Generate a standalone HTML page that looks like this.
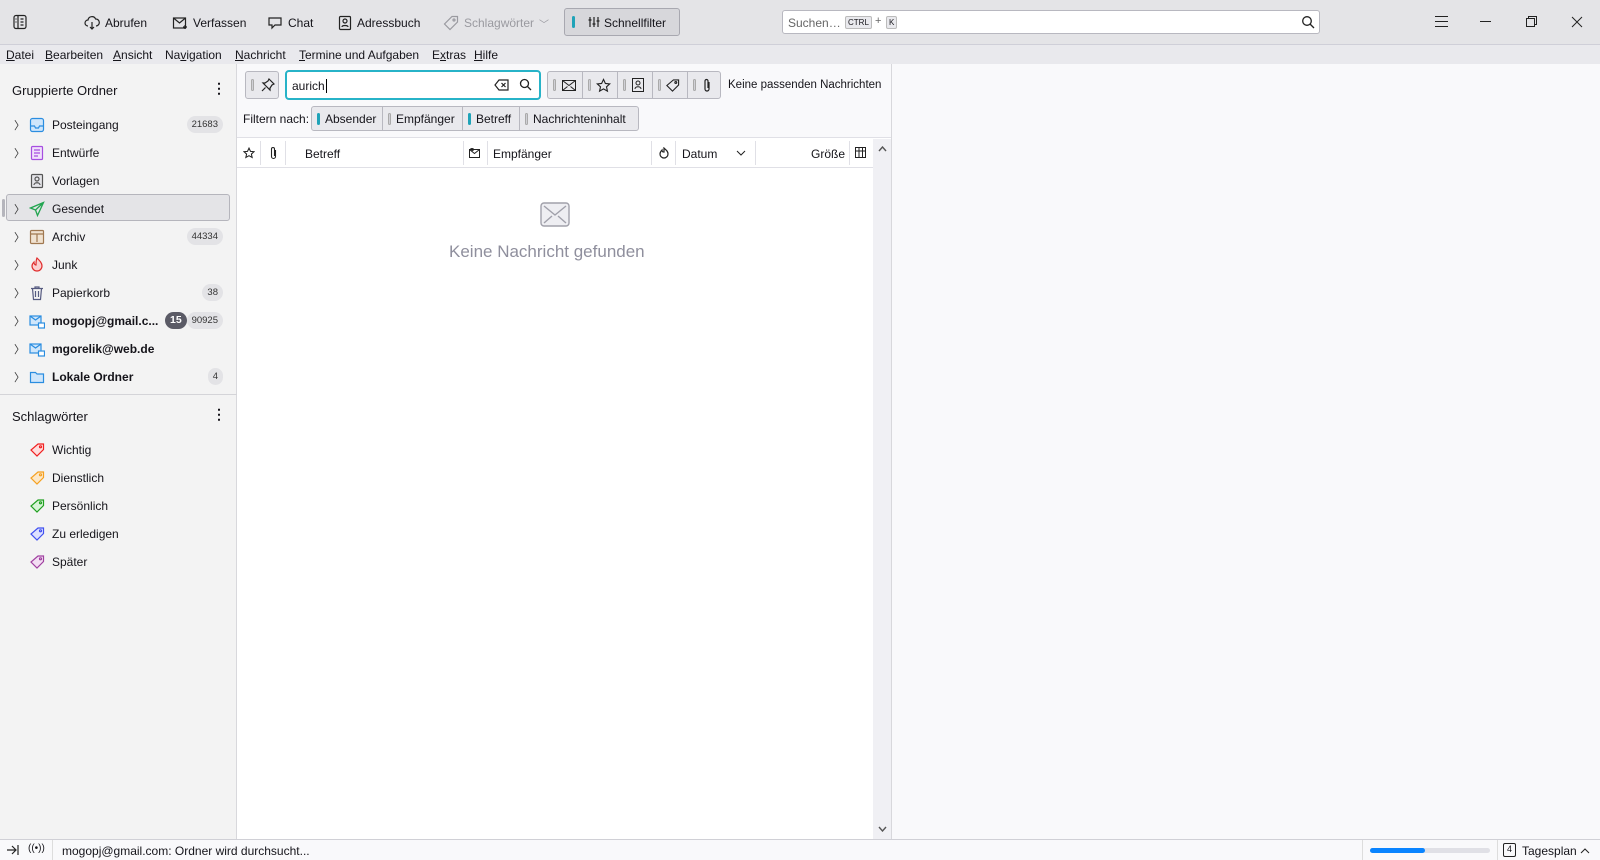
<!DOCTYPE html>
<html><head><meta charset="utf-8"><style>
*{box-sizing:border-box;margin:0;padding:0}
body{width:1600px;height:860px;overflow:hidden;font-family:"Liberation Sans",sans-serif;font-size:12px;color:#15141a;background:#f9f9fb;position:relative;white-space:nowrap}
.abs{position:absolute}
#tb{left:0;top:0;width:1600px;height:45px;background:#e4e4e7;border-bottom:1px solid #cfcfd8}
#mb{left:0;top:45px;width:1600px;height:19px;background:#e9e9ed}
.mi{position:absolute;top:3px;font-size:12px}
.tbi{position:absolute;top:15px;font-size:12px;display:flex;align-items:center;gap:5px}
#side{left:0;top:64px;width:237px;height:775px;background:#f3f3f3;border-right:1px solid #d8d8dc}
.row{position:absolute;left:0;width:237px;height:28px;display:flex;align-items:center}
.row .chev{position:absolute;left:14px;font-size:11px;color:#333}
.row .ic{position:absolute;left:29px;top:6px;width:16px;height:16px}
.row .t{position:absolute;left:52px;font-size:12px}
.badge{position:absolute;background:#e3e3e6;border-radius:9px;font-size:9.5px;height:17px;line-height:17px;padding:0 5px;color:#333}
#list{left:237px;top:64px;width:654px;height:775px;background:#fff}
#qf{left:237px;top:64px;width:654px;height:74px;background:#f9f9fb;border-bottom:1px solid #e0e0e6}
.btn{position:absolute;background:#e9e9ed;border:1px solid #b8b8c0;border-radius:3px}
.pill{display:inline-block;width:3px;height:12px;border-radius:2px;background:#d0d0d6;border:1px solid #aaa;margin-right:5px;vertical-align:-2px}
.pill.on{background:#1fa3b8;border-color:#1fa3b8}
.ch{position:absolute;top:147px;font-size:12px}
.sep{position:absolute;top:141px;width:1px;height:24px;background:#e0e0e6}
#status{left:0;top:839px;width:1600px;height:21px;background:#f9f9fb;border-top:1px solid #d0d0d6}
</style></head><body>
<div id="tb" class="abs">
 <svg class="abs" style="left:12px;top:14px" width="16" height="16" viewBox="0 0 16 16" fill="none" stroke="#222" stroke-width="1.2"><rect x="2" y="1.5" width="12" height="13" rx="2"/><path d="M6 2v12M8.5 5h3M8.5 8h3M8.5 11h3M3.5 5h1M3.5 8h1"/></svg>
 <div class="tbi" style="left:84px"><svg width="16" height="16" viewBox="0 0 16 16" fill="none" stroke="#222" stroke-width="1.2"><path d="M4 11a3 3 0 010-6 4 4 0 017.6-1A3 3 0 0112 11M8 7v7M6 12l2 2 2-2"/></svg>Abrufen</div>
 <div class="tbi" style="left:172px"><svg width="16" height="16" viewBox="0 0 16 16" fill="none" stroke="#222" stroke-width="1.2"><rect x="1.5" y="3" width="12" height="10"/><path d="M1.5 3l6 5 6-5M11 12h4M13 10v4"/></svg>Verfassen</div>
 <div class="tbi" style="left:267px"><svg width="16" height="16" viewBox="0 0 16 16" fill="none" stroke="#222" stroke-width="1.2"><path d="M2 3h12v7H8l-3 3v-3H2z"/></svg>Chat</div>
 <div class="tbi" style="left:338px"><svg width="14" height="16" viewBox="0 0 14 16" fill="none" stroke="#222" stroke-width="1.2"><rect x="1.5" y="1.5" width="11" height="13" rx="1"/><circle cx="7" cy="6" r="2"/><path d="M4 12c0-2 6-2 6 0"/></svg>Adressbuch</div>
 <div class="tbi" style="left:443px;color:#9a9aa0"><svg width="16" height="16" viewBox="0 0 16 16" fill="none" stroke="#9a9aa0" stroke-width="1.2"><path d="M9 1.5h5.5V7L7 14.5 1.5 9z"/><circle cx="11" cy="5" r="1"/></svg>Schlagwörter <span style="font-size:10px">﹀</span></div>
 <div class="btn" style="left:564px;top:8px;width:116px;height:28px;background:#d7d7db;border-color:#a8a8b0"><span class="pill on" style="position:absolute;left:7px;top:7px"></span>
  <svg class="abs" style="left:23px;top:7px" width="12" height="12" fill="none" stroke="#222" stroke-width="1.2"><path d="M2 1v10M6 1v10M10 1v10M0.5 4h3M4.5 8h3M8.5 5h3"/></svg>
  <span style="position:absolute;left:39px;top:7px">Schnellfilter</span></div>
 <div class="abs" style="left:782px;top:10px;width:538px;height:24px;background:#fff;border:1px solid #b8b8c0;border-radius:3px">
  <span class="abs" style="left:5px;top:5px;color:#666;font-size:12px">Suchen…</span>
  <span class="abs" style="left:62px;top:5px;font-size:8px;background:#e9e9ed;border:1px solid #bbb;border-radius:2px;padding:1px 2px">CTRL</span>
  <span class="abs" style="left:92px;top:4px;color:#666;font-size:11px">+</span>
  <span class="abs" style="left:103px;top:5px;font-size:8px;background:#e9e9ed;border:1px solid #bbb;border-radius:2px;padding:1px 2px">K</span>
  <svg class="abs" style="left:518px;top:4px" width="14" height="14" viewBox="0 0 14 14" fill="none" stroke="#222" stroke-width="1.3"><circle cx="6" cy="6" r="4.3"/><path d="M9 9l4 4"/></svg>
 </div>
 <svg class="abs" style="left:1435px;top:16px" width="13" height="11" stroke="#222"><path d="M0 .5h13M0 5.5h13M0 10.5h13"/></svg>
 <div class="abs" style="left:1480px;top:21px;width:11px;height:1px;background:#222"></div>
 <svg class="abs" style="left:1526px;top:16px" width="11" height="11" fill="none" stroke="#222"><rect x="0.5" y="2.5" width="8" height="8"/><path d="M2.5 2.5V.5h8v8h-2"/></svg>
 <svg class="abs" style="left:1571px;top:16px" width="12" height="12" stroke="#222"><path d="M1 1l10 10M11 1L1 11"/></svg>
</div>
<div id="mb" class="abs">
 <span class="mi" style="left:6px"><u>D</u>atei</span><span class="mi" style="left:45px"><u>B</u>earbeiten</span><span class="mi" style="left:113px"><u>A</u>nsicht</span><span class="mi" style="left:165px">Na<u>v</u>igation</span><span class="mi" style="left:235px"><u>N</u>achricht</span><span class="mi" style="left:299px"><u>T</u>ermine und Aufgaben</span><span class="mi" style="left:432px">E<u>x</u>tras</span><span class="mi" style="left:474px"><u>H</u>ilfe</span>
</div>
<div id="side" class="abs">
 <div class="abs" style="left:12px;top:19px;font-size:13px">Gruppierte Ordner</div>
 <div class="abs" style="left:212px;top:16px;font-size:14px;font-weight:bold">⋮</div>
 <div class="row" style="top:47px"><span class="chev">〉</span><svg class="ic" viewBox="0 0 16 16" fill="none" stroke="#2a8de0" stroke-width="1.2"><rect x="1.5" y="1.5" width="13" height="13" rx="2" fill="#cfe6fb"/><path d="M1.5 9h4l1 2h3l1-2h4"/></svg><span class="t">Posteingang</span><span class="badge" style="right:14px;top:5px">21683</span></div>
 <div class="row" style="top:75px"><span class="chev">〉</span><svg class="ic" viewBox="0 0 16 16" fill="none" stroke="#a64ee0" stroke-width="1.2"><rect x="2.5" y="1.5" width="11" height="13" rx="1" fill="#f0e0fb"/><path d="M5 5h6M5 8h6M5 11h4"/></svg><span class="t">Entwürfe</span></div>
 <div class="row" style="top:103px"><svg class="ic" viewBox="0 0 16 16" fill="none" stroke="#555" stroke-width="1.2"><rect x="2.5" y="1.5" width="11" height="13" rx="1" fill="#e4e4e8"/><circle cx="8" cy="6" r="2"/><path d="M5 12c0-3 6-3 6 0"/></svg><span class="t">Vorlagen</span></div>
 <div class="abs" style="top:130px;left:6px;width:224px;height:27px;background:#e4e4e7;border:1px solid #b5b5bc;border-radius:3px"></div>
 <div class="abs" style="left:2px;top:135px;width:3px;height:18px;background:#b5b5bc;border-radius:2px"></div>
 <div class="row" style="top:131px"><span class="chev">〉</span><svg class="ic" viewBox="0 0 16 16" fill="none" stroke="#22a550" stroke-width="1.3"><path d="M14.5 1.5L1.5 7l5 2 2 5.5z M6.5 9l8-7.5"/></svg><span class="t">Gesendet</span></div>
 <div class="row" style="top:159px"><span class="chev">〉</span><svg class="ic" viewBox="0 0 16 16" fill="none" stroke="#a07850" stroke-width="1.2"><rect x="1.5" y="1.5" width="13" height="13" rx="1" fill="#f0e2d0"/><path d="M1.5 5h13M8 5v8"/></svg><span class="t">Archiv</span><span class="badge" style="right:14px;top:5px">44334</span></div>
 <div class="row" style="top:187px"><span class="chev">〉</span><svg class="ic" viewBox="0 0 16 16" fill="#fbd0d0" stroke="#e02c2c" stroke-width="1.2"><path d="M8 1c3 3 5 5 5 8a5 5 0 01-10 0c0-2 1-3 2-4 0 2 1 3 2 3 0-3 0-5 1-7z"/></svg><span class="t">Junk</span></div>
 <div class="row" style="top:215px"><span class="chev">〉</span><svg class="ic" viewBox="0 0 16 16" fill="none" stroke="#555a80" stroke-width="1.2"><path d="M2 3.5h12M6 3.5V2h4v1.5M3.5 3.5l1 11h7l1-11M6.5 6v6M9.5 6v6"/></svg><span class="t">Papierkorb</span><span class="badge" style="right:14px;top:5px">38</span></div>
 <div class="row" style="top:243px"><span class="chev">〉</span><svg class="ic" viewBox="0 0 16 16" fill="none" stroke="#2a8de0" stroke-width="1.2"><rect x="1" y="3" width="11" height="9" fill="#cfe6fb"/><path d="M1 3l5.5 4 5.5-4"/><rect x="9.5" y="10" width="6" height="5" fill="#fff"/></svg><span class="t" style="font-weight:bold">mogopj@gmail.c...</span><span class="badge" style="left:165px;top:5px;background:#5b5b66;color:#fff;font-weight:bold;font-size:10.5px">15</span><span class="badge" style="right:14px;top:5px">90925</span></div>
 <div class="row" style="top:271px"><span class="chev">〉</span><svg class="ic" viewBox="0 0 16 16" fill="none" stroke="#2a8de0" stroke-width="1.2"><rect x="1" y="3" width="11" height="9" fill="#cfe6fb"/><path d="M1 3l5.5 4 5.5-4"/><rect x="9.5" y="10" width="6" height="5" fill="#fff"/></svg><span class="t" style="font-weight:bold">mgorelik@web.de</span></div>
 <div class="row" style="top:299px"><span class="chev">〉</span><svg class="ic" viewBox="0 0 16 16" fill="#cfe6fb" stroke="#2a8de0" stroke-width="1.2"><path d="M1.5 3.5h5l1.5 1.5h6.5v8.5h-13z"/></svg><span class="t" style="font-weight:bold">Lokale Ordner</span><span class="badge" style="right:14px;top:5px">4</span></div>
 <div class="abs" style="left:0;top:330px;width:237px;height:1px;background:#d4d4d8"></div>
 <div class="abs" style="left:12px;top:345px;font-size:13px">Schlagwörter</div>
 <div class="abs" style="left:212px;top:342px;font-size:14px;font-weight:bold">⋮</div>
 <div class="row" style="top:372px"><svg class="ic" viewBox="0 0 16 16" fill="#fdd" stroke="#f02020" stroke-width="1.2"><path d="M9 2h5.5v5.5L8 14 2 8z"/><circle cx="11.5" cy="4.8" r="1" fill="#fff"/></svg><span class="t">Wichtig</span></div>
 <div class="row" style="top:400px"><svg class="ic" viewBox="0 0 16 16" fill="#fde8c8" stroke="#f5a020" stroke-width="1.2"><path d="M9 2h5.5v5.5L8 14 2 8z"/><circle cx="11.5" cy="4.8" r="1" fill="#fff"/></svg><span class="t">Dienstlich</span></div>
 <div class="row" style="top:428px"><svg class="ic" viewBox="0 0 16 16" fill="#d8f4d8" stroke="#20a020" stroke-width="1.2"><path d="M9 2h5.5v5.5L8 14 2 8z"/><circle cx="11.5" cy="4.8" r="1" fill="#fff"/></svg><span class="t">Persönlich</span></div>
 <div class="row" style="top:456px"><svg class="ic" viewBox="0 0 16 16" fill="#dde0ff" stroke="#4050f0" stroke-width="1.2"><path d="M9 2h5.5v5.5L8 14 2 8z"/><circle cx="11.5" cy="4.8" r="1" fill="#fff"/></svg><span class="t">Zu erledigen</span></div>
 <div class="row" style="top:484px"><svg class="ic" viewBox="0 0 16 16" fill="#f3def3" stroke="#a040a0" stroke-width="1.2"><path d="M9 2h5.5v5.5L8 14 2 8z"/><circle cx="11.5" cy="4.8" r="1" fill="#fff"/></svg><span class="t">Später</span></div>
</div>
<div id="list" class="abs"></div>
<div id="qf" class="abs">
 <div class="btn" style="left:8px;top:7px;width:34px;height:28px"><span class="pill" style="position:absolute;left:5px;top:7px"></span>
  <svg class="abs" style="left:15px;top:6px" width="14" height="14" fill="none" stroke="#222" stroke-width="1.2"><path d="M8 1l5 5-2 1-2 3 0 2-7-7 2 0 3-2z M4.5 9.5L1 13"/></svg></div>
 <div class="abs" style="left:48px;top:6px;width:256px;height:30px;background:#fff;border:2px solid #27b3c8;border-radius:4px">
  <span class="abs" style="left:5px;top:7px;font-size:12px">aurich<span style="border-left:1px solid #000;margin-left:1px"></span></span>
  <svg class="abs" style="left:207px;top:6px" width="16" height="14" viewBox="0 0 16 14" fill="none" stroke="#222" stroke-width="1.2"><path d="M5 2h9v10H5L1 7z M7.5 5l4 4M11.5 5l-4 4"/></svg>
  <svg class="abs" style="left:232px;top:6px" width="13" height="13" fill="none" stroke="#222" stroke-width="1.3"><circle cx="5.5" cy="5.5" r="4"/><path d="M8.5 8.5l3.5 3.5"/></svg>
 </div>
 <div class="btn" style="left:310px;top:7px;width:174px;height:28px">
  <div class="abs" style="left:34px;top:0;width:1px;height:26px;background:#b8b8c0"></div><div class="abs" style="left:69px;top:0;width:1px;height:26px;background:#b8b8c0"></div><div class="abs" style="left:104px;top:0;width:1px;height:26px;background:#b8b8c0"></div><div class="abs" style="left:139px;top:0;width:1px;height:26px;background:#b8b8c0"></div>
  <span class="pill" style="position:absolute;left:5px;top:7px"></span><span class="pill" style="position:absolute;left:40px;top:7px"></span><span class="pill" style="position:absolute;left:75px;top:7px"></span><span class="pill" style="position:absolute;left:110px;top:7px"></span><span class="pill" style="position:absolute;left:145px;top:7px"></span>
  <svg class="abs" style="left:14px;top:7px" width="14" height="12" fill="none" stroke="#222"><rect x=".5" y="1.5" width="13" height="10"/><path d="M.5 1.5l6.5 5 6.5-5M.5 11.5l5-4M13.5 11.5l-5-4"/></svg>
  <svg class="abs" style="left:48px;top:6px" width="15" height="15" viewBox="0 0 16 16" fill="none" stroke="#222" stroke-width="1.2"><path d="M8 1.5l2 4.3 4.6.5-3.4 3.1 1 4.6L8 11.6 3.8 14l1-4.6L1.4 6.3l4.6-.5z"/></svg>
  <svg class="abs" style="left:84px;top:6px" width="12" height="14" fill="none" stroke="#222"><rect x=".5" y=".5" width="11" height="13"/><circle cx="6" cy="5" r="2"/><path d="M3 11c0-3 6-3 6 0"/></svg>
  <svg class="abs" style="left:117px;top:6px" width="15" height="15" viewBox="0 0 16 16" fill="none" stroke="#222" stroke-width="1.2"><path d="M9 2h5.5v5.5L8 14 2 8z"/><circle cx="11.5" cy="4.8" r="1"/></svg>
  <svg class="abs" style="left:154px;top:6px" width="10" height="15" fill="none" stroke="#222" stroke-width="1.2"><path d="M7 4v7a2 2 0 01-4 0V3a1.5 1.5 0 013 0v7"/></svg>
 </div>
 <div class="abs" style="left:491px;top:15px;font-size:11.5px">Keine passenden Nachrichten</div>
 <div class="abs" style="left:6px;top:48px;font-size:12px">Filtern nach:</div>
 <div class="btn" style="left:74px;top:42px;width:328px;height:25px;font-size:12px">
  <span class="abs" style="left:5px;top:5px"><span class="pill on"></span>Absender</span>
  <div class="abs" style="left:70px;top:0;width:1px;height:23px;background:#b8b8c0"></div>
  <span class="abs" style="left:76px;top:5px"><span class="pill"></span>Empfänger</span>
  <div class="abs" style="left:150px;top:0;width:1px;height:23px;background:#b8b8c0"></div>
  <span class="abs" style="left:156px;top:5px"><span class="pill on"></span>Betreff</span>
  <div class="abs" style="left:207px;top:0;width:1px;height:23px;background:#b8b8c0"></div>
  <span class="abs" style="left:213px;top:5px"><span class="pill"></span>Nachrichteninhalt</span>
 </div>
</div>
<div class="abs" style="left:237px;top:167px;width:636px;height:1px;background:#e0e0e6"></div>
<svg class="abs" style="left:243px;top:147px" width="12" height="12" viewBox="0 0 16 16" fill="none" stroke="#222" stroke-width="1.4"><path d="M8 1.5l2 4.3 4.6.5-3.4 3.1 1 4.6L8 11.6 3.8 14l1-4.6L1.4 6.3l4.6-.5z"/></svg>
<div class="sep" style="left:260px"></div>
<svg class="abs" style="left:269px;top:146px" width="9" height="14" fill="none" stroke="#222" stroke-width="1.1"><path d="M6.5 4v6.5a2 2 0 01-4 0V3a1.5 1.5 0 013 0v7"/></svg>
<div class="sep" style="left:285px"></div>
<span class="ch" style="left:305px">Betreff</span>
<div class="sep" style="left:463px"></div>
<svg class="abs" style="left:469px;top:148px" width="11" height="10" fill="none" stroke="#222"><rect x=".5" y="1.5" width="10" height="8"/><circle cx="3" cy="1.5" r="1.3"/><path d="M.5 1.5l5 4 5-4"/></svg>
<div class="sep" style="left:487px"></div>
<span class="ch" style="left:493px">Empfänger</span>
<div class="sep" style="left:651px"></div>
<svg class="abs" style="left:659px;top:147px" width="10" height="12" fill="none" stroke="#222" stroke-width="1.2"><path d="M5 1c2 2 4 3 4 6a4 4 0 01-8 0c0-2 1-3 2-4 0 2 1 2 2 2z"/></svg>
<div class="sep" style="left:675px"></div>
<span class="ch" style="left:682px">Datum</span>
<svg class="abs" style="left:736px;top:150px" width="10" height="6" fill="none" stroke="#222"><path d="M1 1l4 4 4-4"/></svg>
<div class="sep" style="left:755px"></div>
<span class="ch" style="left:811px">Größe</span>
<div class="sep" style="left:849px"></div>
<svg class="abs" style="left:855px;top:147px" width="11" height="11" fill="none" stroke="#222"><rect x=".5" y=".5" width="10" height="10"/><path d="M.5 4h10M4 .5v10M7.5 .5v10"/></svg>
<div class="abs" style="left:873px;top:139px;width:18px;height:700px;background:#f0f0f4"></div>
<svg class="abs" style="left:878px;top:146px" width="9" height="6" fill="none" stroke="#555" stroke-width="1.4"><path d="M1 5l3.5-4 3.5 4"/></svg>
<svg class="abs" style="left:878px;top:826px" width="9" height="6" fill="none" stroke="#555" stroke-width="1.4"><path d="M1 1l3.5 4 3.5-4"/></svg>
<div class="abs" style="left:891px;top:64px;width:1px;height:775px;background:#d8d8dc"></div>
<svg class="abs" style="left:540px;top:202px" width="30" height="25" fill="#eeeef2" stroke="#a0a0aa" stroke-width="1.4"><rect x="1" y="1" width="28" height="23" rx="3"/><path d="M4 4l11 9 11-9M4 21l8-7M26 21l-8-7" fill="none"/></svg>
<div class="abs" style="left:449px;top:242px;font-size:17px;color:#8f8f9d">Keine Nachricht gefunden</div>
<div id="status" class="abs">
 <svg class="abs" style="left:7px;top:5px" width="12" height="10" fill="none" stroke="#222" stroke-width="1.2"><path d="M0 5h9M5 1l4 4-4 4M11 0v10"/></svg>
 <span class="abs" style="left:28px;top:3px;font-size:10px">((•))</span>
 <div class="abs" style="left:52px;top:0;width:1px;height:20px;background:#ddd"></div>
 <span class="abs" style="left:62px;top:4px;font-size:12px">mogopj@gmail.com: Ordner wird durchsucht...</span>
 <div class="abs" style="left:1362px;top:0;width:1px;height:20px;background:#ddd"></div>
 <div class="abs" style="left:1370px;top:8px;width:120px;height:5px;background:#e0e0e6;border-radius:3px"><div style="width:55px;height:5px;background:#0a84ff;border-radius:3px"></div></div>
 <div class="abs" style="left:1497px;top:0;width:1px;height:20px;background:#ddd"></div>
 <span class="abs" style="left:1503px;top:3px;width:13px;height:14px;border:1px solid #222;border-radius:2px;font-size:9px;text-align:center">4</span>
 <span class="abs" style="left:1522px;top:4px;font-size:12px">Tagesplan</span>
 <svg class="abs" style="left:1580px;top:8px" width="10" height="6" fill="none" stroke="#222"><path d="M1 5l4-4 4 4"/></svg>
</div>
</body></html>
